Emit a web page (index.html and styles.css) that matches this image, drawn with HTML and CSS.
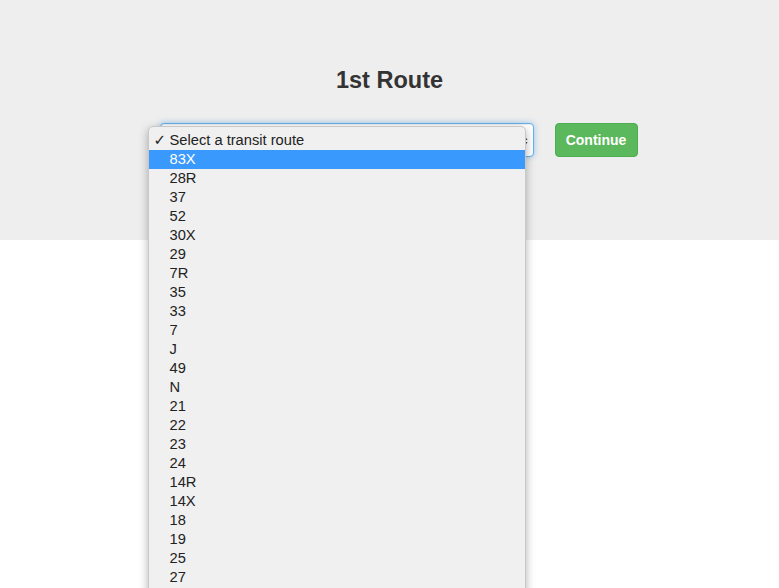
FILE: index.html
```html
<!DOCTYPE html>
<html>
<head>
<meta charset="utf-8">
<link rel="stylesheet" href="styles.css">
</head>
<body>
<div class="jumbotron">
  <h1 class="title">1st Route</h1>
  <div class="form-row">
    <div class="select-wrap">
      <div class="select">
        <svg class="arrows" width="7" height="12" viewBox="0 0 7 12"><path d="M0.5 5 L3.5 0.5 L6.5 5 Z M0.5 7 L3.5 11.5 L6.5 7 Z" fill="#444"/></svg>
      </div>
      <ul class="popup">
        <li class="opt checked"><span class="check">✓</span>Select a transit route</li>
        <li class="opt active">83X</li>
        <li class="opt">28R</li>
        <li class="opt">37</li>
        <li class="opt">52</li>
        <li class="opt">30X</li>
        <li class="opt">29</li>
        <li class="opt">7R</li>
        <li class="opt">35</li>
        <li class="opt">33</li>
        <li class="opt">7</li>
        <li class="opt">J</li>
        <li class="opt">49</li>
        <li class="opt">N</li>
        <li class="opt">21</li>
        <li class="opt">22</li>
        <li class="opt">23</li>
        <li class="opt">24</li>
        <li class="opt">14R</li>
        <li class="opt">14X</li>
        <li class="opt">18</li>
        <li class="opt">19</li>
        <li class="opt">25</li>
        <li class="opt">27</li>
      </ul>
    </div>
    <button class="btn">Continue</button>
  </div>
</div>
</body>
</html>
```
FILE: styles.css
```css
html, body {
  margin: 0;
  padding: 0;
  height: 100%;
  overflow: hidden;
  background: #fff;
  font-family: "Liberation Sans", Arial, Helvetica, sans-serif;
  color: #333;
}
.jumbotron {
  background: #eeeeee;
  height: 240px;
  padding-top: 66px;
  box-sizing: border-box;
}
.title {
  margin: 0;
  text-align: center;
  font-size: 23.5px;
  font-weight: bold;
  line-height: 28px;
  color: #333;
}
.form-row {
  display: flex;
  justify-content: center;
  margin-top: 29px;
  padding-left: 18px;
  gap: 21px;
}
.select-wrap {
  position: relative;
  width: 374px;
  height: 34px;
}
.select {
  box-sizing: border-box;
  width: 374px;
  height: 34px;
  background: #fff;
  border: 1px solid #66afe9;
  border-radius: 4px;
  box-shadow: inset 0 1px 1px rgba(0,0,0,.075), 0 0 6px rgba(102,175,233,.6);
  position: relative;
}
.arrows {
  position: absolute;
  right: 5px;
  top: 11px;
}
.popup {
  position: absolute;
  left: -12px;
  top: 3px;
  width: 378px;
  height: 480px;
  margin: 0;
  padding: 4px 0;
  list-style: none;
  background: #f0f0f0;
  border: 1px solid #c8c8c8;
  border-radius: 5px;
  box-sizing: border-box;
  box-shadow: 0 3px 10px rgba(0,0,0,.3);
  z-index: 10;
}
.opt {
  height: 19px;
  line-height: 19px;
  font-size: 14.7px;
  padding-left: 21px;
  color: #222;
  position: relative;
}
.opt.active {
  background: #3a99fc;
  color: #fff;
}
.check {
  position: absolute;
  left: 5px;
  top: 0;
  font-size: 15px;
  font-family: "DejaVu Sans", sans-serif;
}
.btn {
  width: 83px;
  height: 34px;
  background: #5cb85c;
  border: 1px solid #4cae4c;
  border-radius: 4px;
  color: #fff;
  font-family: "Liberation Sans", Arial, sans-serif;
  font-size: 14px;
  font-weight: bold;
  padding: 0;
  cursor: pointer;
}
```
